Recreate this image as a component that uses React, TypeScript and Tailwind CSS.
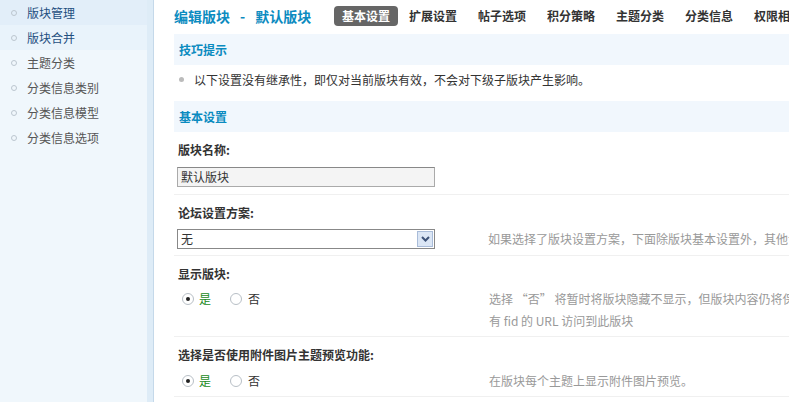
const font = { fontFamily: '"Noto Sans CJK SC", "Noto Sans", sans-serif' }

const NAV = [
  { label: '版块管理', bg: 'bg-[#e2eef9]', text: 'text-[#1f4f7f]' },
  { label: '版块合并', bg: 'bg-[#e9f3fb]', text: 'text-[#1f4f7f]' },
  { label: '主题分类', bg: '', text: 'text-[#555]' },
  { label: '分类信息类别', bg: '', text: 'text-[#555]' },
  { label: '分类信息模型', bg: '', text: 'text-[#555]' },
  { label: '分类信息选项', bg: '', text: 'text-[#555]' },
]

const TABS = ['基本设置', '扩展设置', '帖子选项', '积分策略', '主题分类', '分类信息', '权限相关']

const Sidebar = () => (
  <aside className="flex shrink-0 h-full">
    <div className="w-[147px] bg-[#f0f7fc] h-full">
      {NAV.map((n) => (
        <div key={n.label} className={`h-[25px] flex items-center pl-[11px] text-[12px] ${n.bg} ${n.text}`}>
          <span className="w-[6px] h-[6px] rounded-full border border-[#bcc6cf] mr-[10px]" />
          {n.label}
        </div>
      ))}
    </div>
    <div className="w-[7px] bg-[#deecf7] border-r border-[#c5d9ea]" />
  </aside>
)

const SectionBar = ({ children }: { children: React.ReactNode }) => (
  <div className="h-[31px] bg-[#f1f7fd] flex items-center pl-[5px] text-[12px] font-bold text-[#0b8bc0]">{children}</div>
)

const Label = ({ children }: { children: React.ReactNode }) => (
  <div className="h-[30px] flex items-end pb-[4px] pl-[4px] text-[12px] font-bold text-[#333] leading-[17px]">{children}</div>
)

const Radio = ({ checked }: { checked?: boolean }) => (
  <span className="w-[12px] h-[12px] rounded-full border border-[#b8bfc6] bg-white flex items-center justify-center">
    {checked && <span className="w-[4px] h-[4px] rounded-full bg-[#222]" />}
  </span>
)

const YesNo = () => (
  <div className="h-[22px] flex items-center text-[12px] pl-[8px]">
    <Radio checked />
    <span className="ml-[5px] text-[#1a8a1a]">是</span>
    <span className="ml-[19px]"><Radio /></span>
    <span className="ml-[6px] text-[#333]">否</span>
  </div>
)

const Row = ({ control, help, h, pt }: { control: React.ReactNode; help?: React.ReactNode; h: string; pt: string }) => (
  <div className={`flex border-b border-[#f0f0f0] ${h} ${pt}`}>
    <div className="w-[315px] shrink-0">{control}</div>
    <div className="text-[12px] text-[#999] leading-[22px] whitespace-nowrap">{help}</div>
  </div>
)

export default function App() {
  return (
    <div className="w-[789px] h-[402px] overflow-hidden flex bg-white" style={font}>
      <Sidebar />
      <main className="flex-1 pl-[20px] min-w-0">
        <div className="h-[32px] flex items-center whitespace-nowrap">
          <h1 className="shrink-0 w-[160px] text-[14px] font-bold text-[#0b8bc0] flex items-center">
            <span>编辑版块</span>
            <span className="mx-[10px]">-</span>
            <span>默认版块</span>
          </h1>
          <nav className="flex items-center text-[12px] font-bold text-[#333]">
            {TABS.map((t, i) => (
              <span
                key={t}
                className={i === 0 ? 'bg-[#666] text-white rounded-[4px] px-[8px] py-[1px] mr-[11px]' : 'mr-[21px]'}
              >
                {t}
              </span>
            ))}
          </nav>
        </div>
        <div className="h-[2px]" />
        <SectionBar>技巧提示</SectionBar>
        <div className="h-[36px] flex items-start pt-[6px] text-[12px] text-[#333] pl-[5px] leading-[17px] whitespace-nowrap">
          <span className="w-[5px] h-[5px] rounded-full bg-[#bbb] mr-[10px] mt-[6px]" />
          以下设置没有继承性，即仅对当前版块有效，不会对下级子版块产生影响。
        </div>
        <SectionBar>基本设置</SectionBar>
        <Label>版块名称:</Label>
        <Row
          h="h-[33px]"
          pt="pt-[5px]"
          control={
            <div className="ml-[3px] w-[258px] h-[20px] border border-[#aaa] border-t-[#888] bg-[#f4f4f4] text-[12px] text-[#333] pl-[3px] leading-[18px]">
              默认版块
            </div>
          }
        />
        <Label>论坛设置方案:</Label>
        <Row
          h="h-[31px]"
          pt="pt-[4px]"
          help={<div className="ml-[-1px] mt-[-1px]">如果选择了版块设置方案，下面除版块基本设置外，其他设置将使用方案中的设置</div>}
          control={
            <div className="ml-[3px] w-[258px] h-[20px] border border-[#888] bg-white text-[12px] text-[#333] flex items-center justify-between">
              <span className="pl-[3px]">无</span>
              <span className="w-[16px] h-[16px] mr-[1px] bg-[#dbe6f5] border border-[#a9bcd9] flex items-center justify-center">
                <svg width="9" height="6" viewBox="0 0 9 6">
                  <path d="M1 1 L4.5 4.5 L8 1" stroke="#3d5278" strokeWidth="2" fill="none" />
                </svg>
              </span>
            </div>
          }
        />
        <Label>显示版块:</Label>
        <Row
          h="h-[51px]"
          pt="pt-[2px]"
          help={
            <>
              <div>选择 “否” 将暂时将版块隐藏不显示，但版块内容仍将保留，且用户仍可通过直接提供带</div>
              <div>有 fid 的 URL 访问到此版块</div>
            </>
          }
          control={<YesNo />}
        />
        <Label>选择是否使用附件图片主题预览功能:</Label>
        <Row
          h="h-[30px]"
          pt="pt-[3px]"
          help="在版块每个主题上显示附件图片预览。"
          control={<YesNo />}
        />
      </main>
    </div>
  )
}
